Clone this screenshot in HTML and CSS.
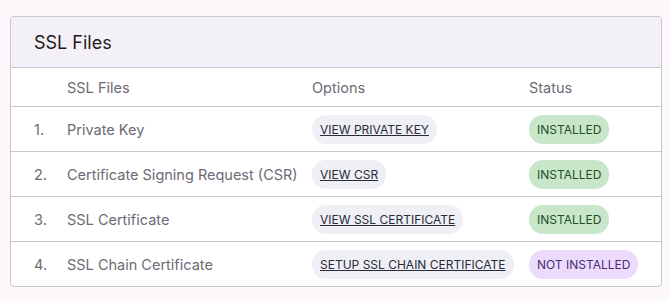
FILE: index.html
```html
<!DOCTYPE html>
<html lang="en">
<head>
  <meta charset="UTF-8">
  <meta name="viewport" content="width=device-width, initial-scale=1.0">
  <title>SSL Files</title>
  <link rel="stylesheet" href="styles.css">
</head>
<body>
<div class="card">
  <div class="card-header">
    <h2>SSL Files</h2>
  </div>
  <table class="ssl-table">
    <thead>
      <tr>
        <th class="num"></th>
        <th class="name">SSL Files</th>
        <th class="opt">Options</th>
        <th class="status">Status</th>
      </tr>
    </thead>
    <tbody>
      <tr>
        <td class="num">1.</td>
        <td class="name">Private Key</td>
        <td class="opt"><a class="pill-link" href="#">View Private Key</a></td>
        <td class="status"><span class="badge installed">Installed</span></td>
      </tr>
      <tr>
        <td class="num">2.</td>
        <td class="name">Certificate Signing Request (CSR)</td>
        <td class="opt"><a class="pill-link" href="#">View CSR</a></td>
        <td class="status"><span class="badge installed">Installed</span></td>
      </tr>
      <tr>
        <td class="num">3.</td>
        <td class="name">SSL Certificate</td>
        <td class="opt"><a class="pill-link" href="#">View SSL Certificate</a></td>
        <td class="status"><span class="badge installed">Installed</span></td>
      </tr>
      <tr>
        <td class="num">4.</td>
        <td class="name">SSL Chain Certificate</td>
        <td class="opt"><a class="pill-link" href="#">Setup SSL Chain Certificate</a></td>
        <td class="status"><span class="badge not-installed">Not Installed</span></td>
      </tr>
    </tbody>
  </table>
</div>
</body>
</html>
```

FILE: styles.css
```css
body {
  margin: 0;
  padding: 16px 8px 14px 10px;
  background-color: #fcf8fc;
  font-family: 'Inter', 'Noto Sans', sans-serif;
  color: #6c6b75;
}
.card {
  border: 1px solid #c9c7cc;
  border-radius: 4px;
  background-color: #ffffff;
  overflow: hidden;
}
.card-header {
  background-color: #f4f0f7;
  border-bottom: 1px solid #c9c7cc;
  height: 50px;
  display: flex;
  align-items: center;
  padding-left: 23px;
}
.card-header h2 {
  margin: 0;
  font-size: 18px;
  font-weight: 400;
  color: #1d1b20;
}
.ssl-table {
  width: 100%;
  border-collapse: collapse;
  font-size: 14.5px;
}
.ssl-table th {
  font-weight: 400;
  text-align: left;
  height: 38px;
  padding: 0;
  border-bottom: 1px solid #c9c7cc;
}
.ssl-table td {
  height: 44px;
  padding: 0;
  border-bottom: 1px solid #c9c7cc;
}
.ssl-table tbody tr:last-child td {
  border-bottom: none;
}
.num {
  width: 33px;
  padding-left: 23px !important;
}
.name {
  width: 245px;
}
.opt {
  width: 217px;
}
.pill-link {
  display: inline-block;
  background-color: #eef0f5;
  color: #2a2a38;
  font-size: 12px;
  text-transform: uppercase;
  text-decoration: underline;
  padding: 7px 8px;
  border-radius: 14px;
}
.badge {
  display: inline-block;
  font-size: 12px;
  text-transform: uppercase;
  padding: 7px 8px;
  border-radius: 14px;
}
.installed {
  background-color: #c8e6c9;
  color: #264d29;
}
.not-installed {
  background-color: #ebdbfc;
  color: #4f2a7a;
}
```
